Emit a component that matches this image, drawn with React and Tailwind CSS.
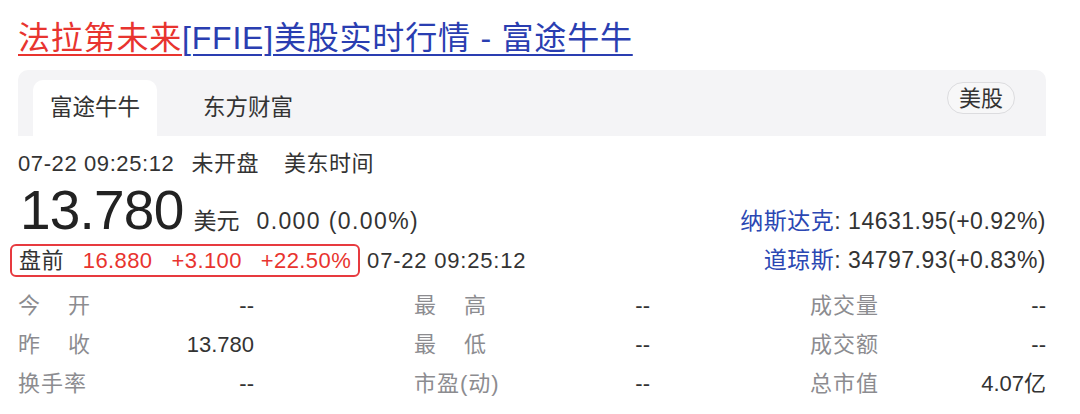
import React from "react";

const FONT = { fontFamily: '"Liberation Sans", "Noto Sans CJK SC", sans-serif' };

const stats = [
  [
    { label: ["今", "开"], value: "--" },
    { label: ["最", "高"], value: "--" },
    { label: "成交量", value: "--" },
  ],
  [
    { label: ["昨", "收"], value: "13.780" },
    { label: ["最", "低"], value: "--" },
    { label: "成交额", value: "--" },
  ],
  [
    { label: "换手率", value: "--" },
    { label: "市盈(动)", value: "--" },
    { label: "总市值", value: "4.07亿" },
  ],
];

const Label = ({ label }) => {
  if (Array.isArray(label)) {
    return (
      <span className="flex w-[72px] justify-between text-[#8c8c90]">
        <span>{label[0]}</span>
        <span>{label[1]}</span>
      </span>
    );
  }
  return <span className="text-[#8c8c90] tracking-[1px]">{label}</span>;
};

const App = () => {
  return (
    <div className="w-[1080px] h-[414px] overflow-hidden bg-white text-[#2b2b2b]" style={FONT}>
      <div className="pl-[18px] pr-[34px]">

        {/* Title */}
        <h1 className="pt-[18px] text-[32px] leading-[40px] tracking-[0.8px]">
          <span className="text-[#e8342f] underline decoration-[2px] underline-offset-[5px]">法拉第未来</span>
          <span className="text-[#2a3eb1] underline decoration-[2px] underline-offset-[5px]">[FFIE]美股实时行情 - 富途牛牛</span>
        </h1>

        {/* Tabs */}
        <div className="mt-[12px] h-[66px] bg-[#f4f4f6] rounded-t-[10px] flex items-end pl-[15px] pr-[31px]">
          <div className="h-[56px] bg-white rounded-t-[10px] px-[17px] flex items-center text-[22.5px] text-[#333]">
            富途牛牛
          </div>
          <div className="h-[56px] px-[46px] flex items-center text-[22.5px] text-[#333]">
            东方财富
          </div>
          <div className="ml-auto self-center mt-[-10px] h-[32px] px-[11px] rounded-full border border-[#dcdcdf] bg-[#f7f7f8] flex items-center text-[22px] text-[#333]">
            美股
          </div>
        </div>

        {/* Time row */}
        <div className="mt-[14px] flex items-center text-[22px] leading-[28px] text-[#333]">
          <span className="tracking-[0.6px]">07-22 09:25:12</span>
          <span className="ml-[17px] tracking-[0.5px]">未开盘</span>
          <span className="ml-[25px] tracking-[0.5px]">美东时间</span>
        </div>

        {/* Price row */}
        <div className="mt-[8px] flex items-baseline justify-between leading-[48px]">
          <div className="flex items-baseline">
            <span className="text-[55px] ml-[2px] tracking-[-0.8px] text-[#222]">13.780</span>
            <span className="ml-[10px] text-[23px] text-[#333]">美元</span>
            <span className="ml-[17px] text-[23px] tracking-[1.4px] text-[#333]">0.000 (0.00%)</span>
          </div>
          <div className="text-[23px] tracking-[0.5px]">
            <span className="text-[#2b47b3]">纳斯达克</span>
            <span className="text-[#333]">: 14631.95(+0.92%)</span>
          </div>
        </div>

        {/* Pre-market row */}
        <div className="mt-[-2px] flex items-center justify-between">
          <div className="flex items-center">
            <div className="ml-[-8px] h-[33px] px-[7px] flex items-center gap-[19px] border-2 border-[#e73a3f] rounded-[6px] text-[22px] tracking-[0.4px]">
              <span className="text-[#333]">盘前</span>
              <span className="text-[#e8342f]">16.880</span>
              <span className="text-[#e8342f]">+3.100</span>
              <span className="text-[#e8342f]">+22.50%</span>
            </div>
            <span className="ml-[7px] text-[22px] tracking-[0.8px] text-[#333]">07-22 09:25:12</span>
          </div>
          <div className="text-[23px] tracking-[0.5px]">
            <span className="text-[#2b47b3]">道琼斯</span>
            <span className="text-[#333]">: 34797.93(+0.83%)</span>
          </div>
        </div>

        {/* Stats table */}
        <div className="mt-[8px] flex flex-col">
          {stats.map((row, i) => (
            <div key={i} className="h-[39px] flex items-center justify-between text-[22px]">
              {row.map((cell, j) => (
                <div key={j} className="w-[236px] flex items-center justify-between">
                  <Label label={cell.label} />
                  <span className="text-[#333]">{cell.value}</span>
                </div>
              ))}
            </div>
          ))}
        </div>

      </div>
    </div>
  );
};

export default App;
